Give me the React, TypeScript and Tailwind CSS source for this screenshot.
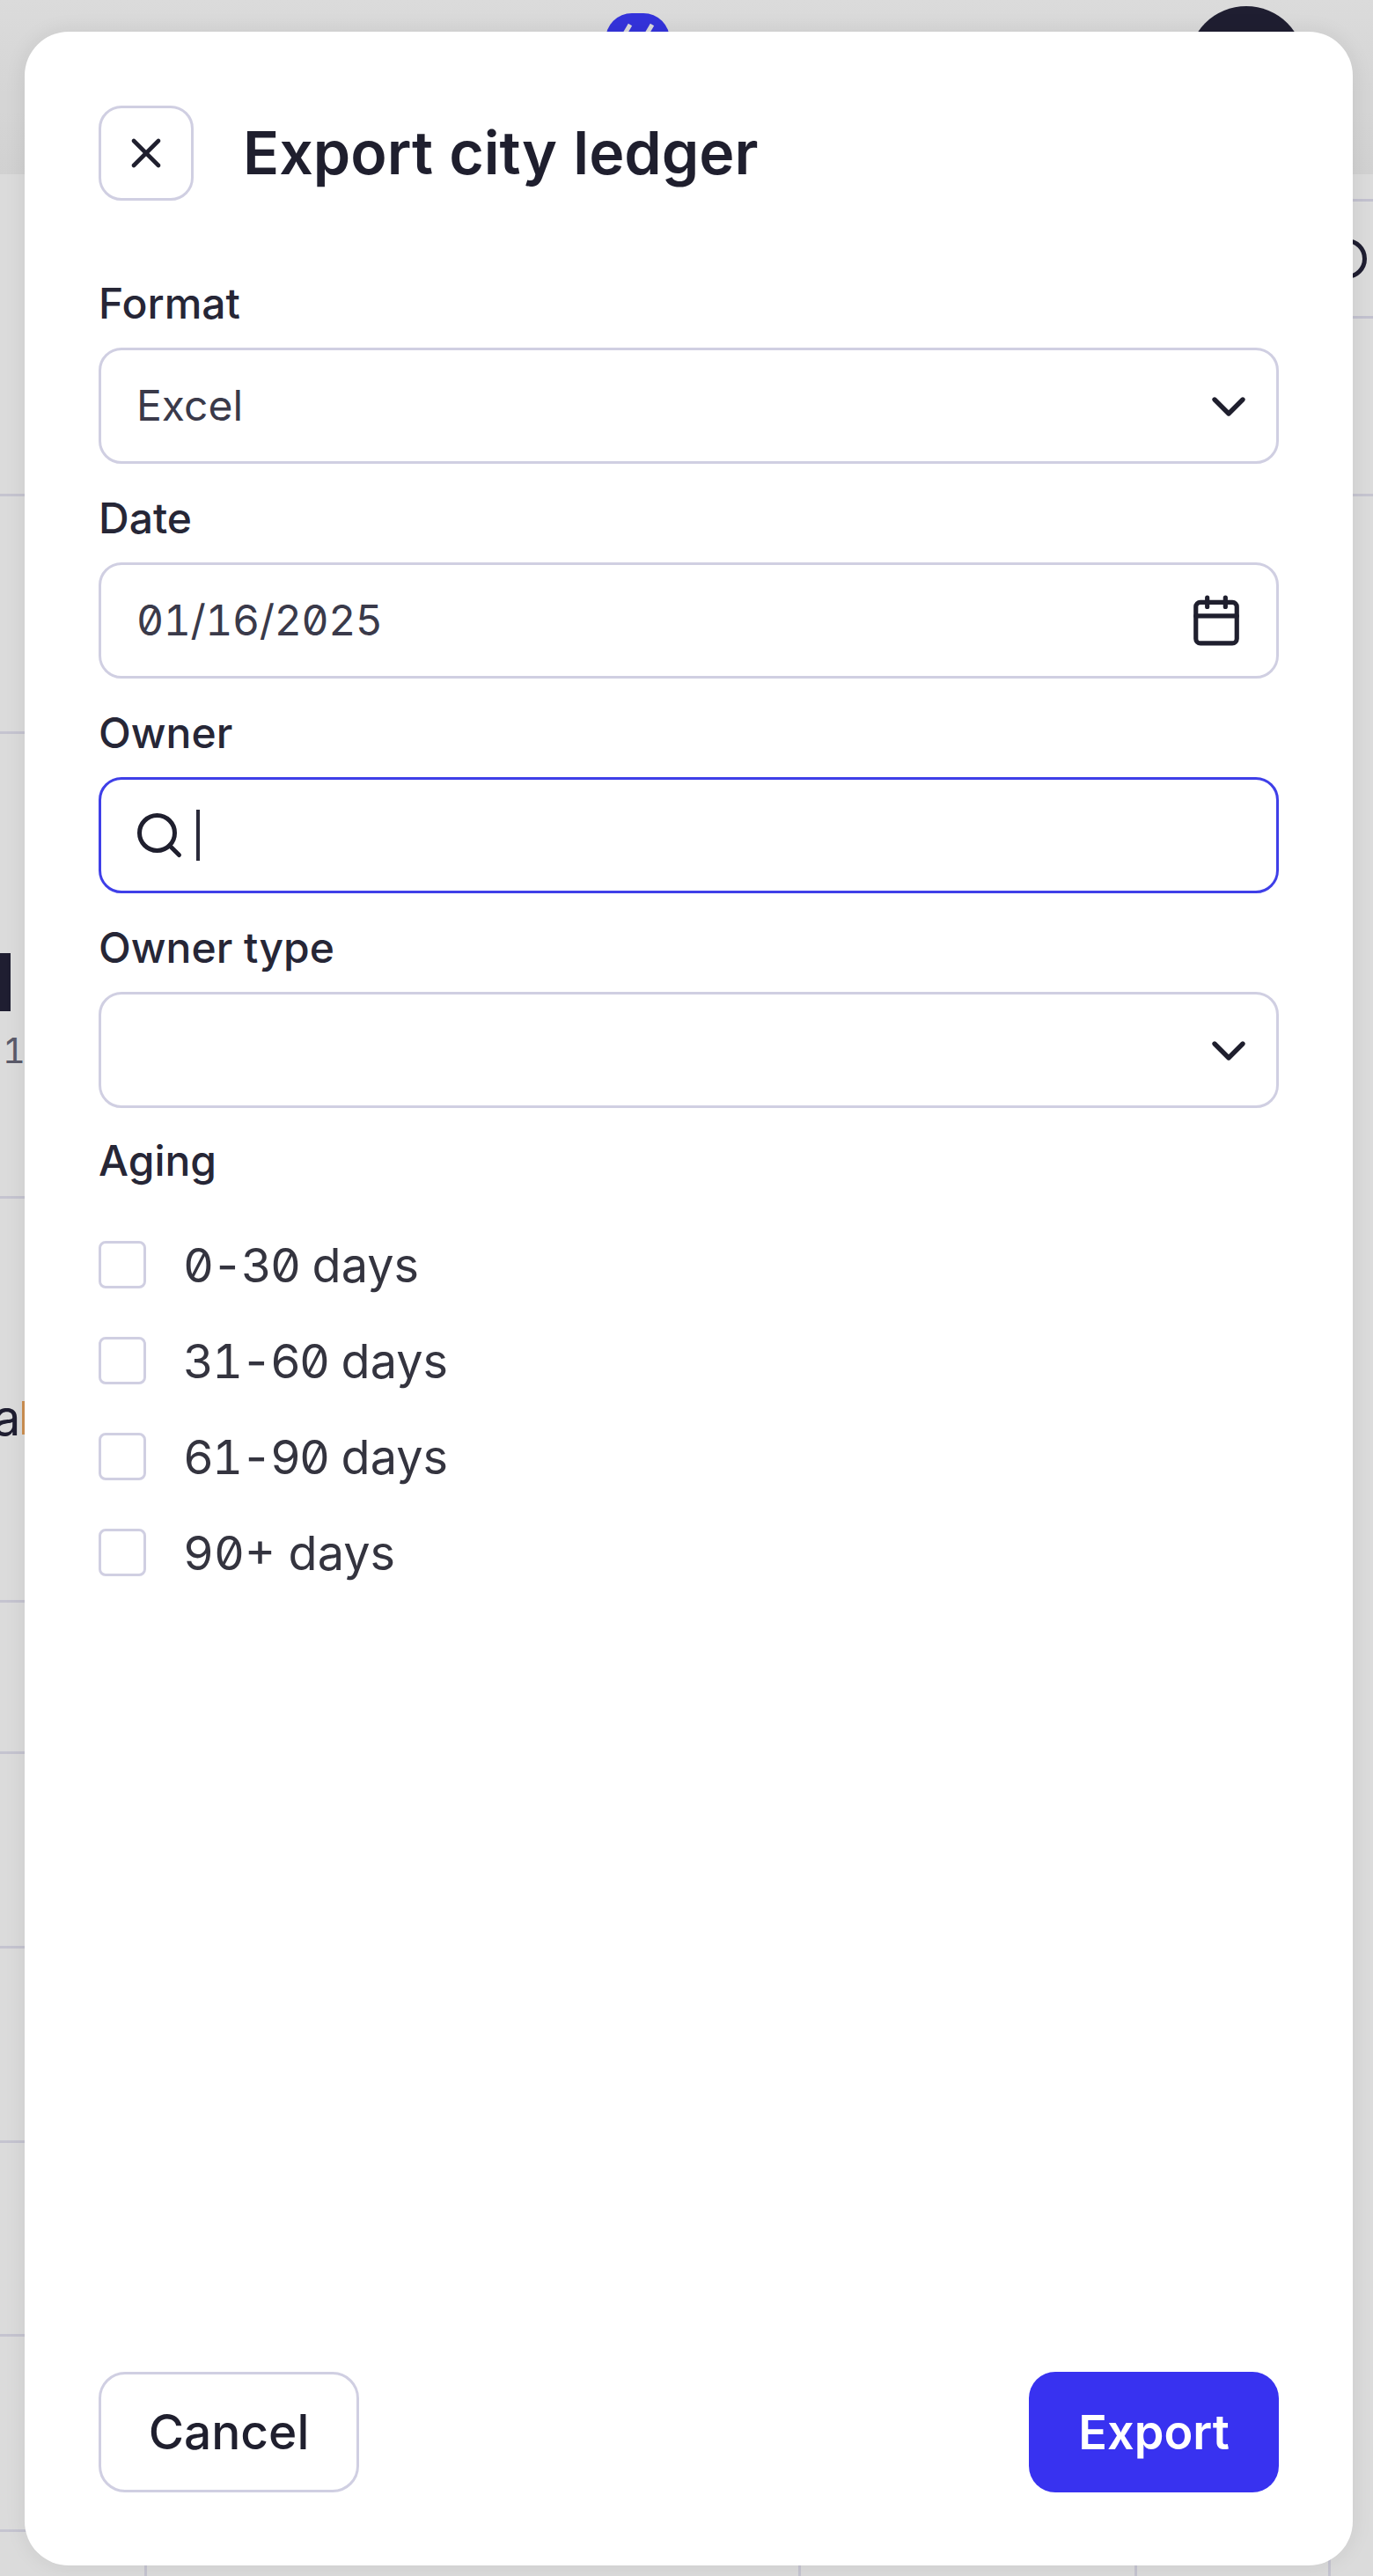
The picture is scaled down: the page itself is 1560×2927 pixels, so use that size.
import React from "react";
import { Calendar, ChevronDown, Search, X } from "lucide-react";

const agingOptions = [
  { range: "0-30", unit: "days", spacing: "tracking-[-2px]" },
  { range: "31-60", unit: "days", spacing: "tracking-[-2px]" },
  { range: "61-90", unit: "days", spacing: "tracking-[-2px]" },
  { range: "90+", unit: "days", spacing: "tracking-normal" },
];

function Label({ children }: { children: React.ReactNode }) {
  return <div className="h-[76px] mb-[12px] text-[48px] leading-[76px] font-medium text-[#262636]">{children}</div>;
}

function Field({ label, children }: { label: string; children: React.ReactNode }) {
  return (
    <div className="mb-[24px]">
      <Label>{label}</Label>
      {children}
    </div>
  );
}

function SelectBox({ value }: { value?: string }) {
  return (
    <div className="flex items-center justify-between h-[132px] pl-[40px] pr-[22px] rounded-[26px] border-[3px] border-[#d0cfe2] text-[48px] text-[#3a3a4a]">
      <span>{value}</span>
      <ChevronDown className="w-[64px] h-[64px] mt-[2px] text-[#1f1f2e]" strokeWidth={2} />
    </div>
  );
}

// what shows through around the dialog
function PageBehind() {
  return (
    <div className="bg-white">
      <div className="flex items-start h-[198px] pl-[688px] bg-linear-to-b from-white to-[#f4f4f4]">
        <div className="mt-[15px] w-[73px] h-[73px] rounded-[30px] bg-[#3d3cff]">
          <svg viewBox="0 0 73 73" className="w-[73px] h-[73px]" fill="none" stroke="#ffffff" strokeWidth={5}>
            <path d="M28 13 L18 30" />
            <path d="M53 13 L43 30" />
          </svg>
        </div>
        <div className="mt-[7px] ml-[589px] w-[132px] h-[132px] rounded-full bg-[#25243a]" />
      </div>
      <div className="h-[366px] pt-[28px] border-b-[3px] border-[#e6e5f3]">
        <div className="flex items-center justify-end ml-auto w-[700px] h-[136px] pr-[7px] border-y-[3px] border-[#e2e1f2]">
          <div className="w-[46px] h-[46px] rounded-full border-[5px] border-[#25243a]" />
        </div>
      </div>
      <div className="w-[1512px] overflow-hidden">
        <div className="h-[270px] border-b-[3px] border-[#e6e5f3]" />
        <div className="h-[528px] pt-[249px] border-b-[3px] border-[#e6e5f3]">
          <div className="w-[12px] h-[66px] bg-[#25243a]" />
          <div className="mt-[20px] pl-[3px] text-[40px] leading-[50px] text-[#6a6a7c]">1</div>
        </div>
        <div className="flex items-start h-[459px] pt-[204px] border-b-[3px] border-[#e6e5f3]">
          <span className="-ml-[8px] text-[56px] leading-[90px] text-[#25243a]">a</span>
          <div className="ml-[2px] mt-[26px] w-[4px] h-[38px] bg-[#f0a860]" />
        </div>
        <div className="h-[172px] border-b-[3px] border-[#e6e5f3]" />
        <div className="h-[221px] border-b-[3px] border-[#e6e5f3]" />
        <div className="h-[221px] border-b-[3px] border-[#e6e5f3]" />
        <div className="h-[220px] border-b-[3px] border-[#e6e5f3]" />
        <div className="h-[222px] border-b-[3px] border-[#e6e5f3]" />
        <div className="flex h-[50px]">
          <div className="w-[167px] border-r-[3px] border-[#e6e5f3]" />
          <div className="w-[743px] border-r-[3px] border-[#e6e5f3]" />
          <div className="w-[382px] border-r-[3px] border-[#e6e5f3]" />
          <div className="flex-1 border-r-[3px] border-[#e6e5f3]" />
        </div>
      </div>
    </div>
  );
}

export default function App() {
  return (
    <div className="relative w-[1560px] h-[2927px] overflow-hidden font-['Inter',sans-serif] slashed-zero tabular-nums">
      <PageBehind />

      <div className="absolute inset-0 bg-black/14" />

      <div className="absolute left-[28px] top-[36px] flex flex-col w-[1509px] h-[2879px] px-[84px] pt-[84px] pb-[83px] rounded-[50px] bg-white shadow-[0_0_24px_rgba(0,0,0,0.08)]">
        {/* Header */}
        <div className="flex items-center gap-[56px] mb-[79px]">
          <button className="flex items-center justify-center w-[108px] h-[108px] rounded-[26px] border-[3px] border-[#d0cfe2] text-[#1f1f2e]">
            <X className="w-[56px] h-[56px]" strokeWidth={2} />
          </button>
          <h2 className="pb-[3px] text-[68px] font-semibold text-[#1f1f2e]">Export city ledger</h2>
        </div>

        <Field label="Format">
          <SelectBox value="Excel" />
        </Field>

        <Field label="Date">
          <div className="flex items-center justify-between h-[132px] pl-[40px] pr-[37px] rounded-[26px] border-[3px] border-[#d0cfe2] text-[48px] text-[#3a3a4a]">
            <span className="tracking-[-0.4px]">01/16/2025</span>
            <Calendar className="w-[62px] h-[62px] text-[#1f1f2e]" strokeWidth={2} />
          </div>
        </Field>

        <Field label="Owner">
          <div className="flex items-center h-[132px] pl-[36px] rounded-[26px] border-[3px] border-[#3f3fe8]">
            <Search className="w-[60px] h-[60px] text-[#1f1f2e]" strokeWidth={2} />
            <div className="ml-[12px] w-[4px] h-[58px] bg-[#2a2a3a]" />
          </div>
        </Field>

        <Field label="Owner type">
          <SelectBox />
        </Field>

        <div className="-mt-[2px]">
          <Label>Aging</Label>
        </div>
        <div className="flex flex-col gap-[55px] mt-[41px]">
          {agingOptions.map((option) => (
            <label key={option.range} className="flex items-center gap-[42px] h-[54px] text-[54px] text-[#34343f]">
              <span className="w-[54px] h-[54px] rounded-[8px] border-[3px] border-[#d0cfe2]" />
              <span>
                <span className={option.spacing}>{option.range}</span> {option.unit}
              </span>
            </label>
          ))}
        </div>

        {/* Footer */}
        <div className="flex items-center justify-between mt-auto">
          <button className="w-[296px] h-[137px] rounded-[30px] border-[3px] border-[#d0cfe2] text-[55px] font-medium text-[#1f1f2e]">
            Cancel
          </button>
          <button className="w-[284px] h-[137px] rounded-[30px] bg-[#3832f0] text-[54px] font-semibold text-white">
            Export
          </button>
        </div>
      </div>
    </div>
  );
}
